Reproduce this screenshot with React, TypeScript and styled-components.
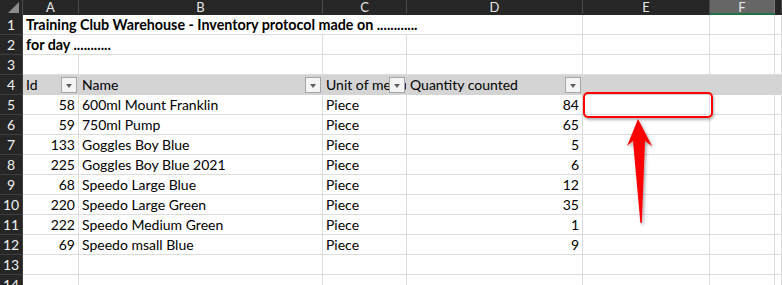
import React from 'react';
import styled, { createGlobalStyle } from 'styled-components';

const GlobalStyle = createGlobalStyle`
  html, body {
    margin: 0;
    padding: 0;
    background: #fff;
    overflow: hidden;
  }
  body {
    font-family: Lato, 'Liberation Sans', sans-serif;
    color: #000;
  }
`;

const Page = styled.div`
  position: relative;
  width: 782px;
  height: 285px;
  overflow: hidden;
`;

const Sheet = styled.div`
  display: grid;
  grid-template-columns: 23px 56px 244px 84px 176px 127px 65px 1fr;
  grid-template-rows: 15px;
  grid-auto-rows: 20px;
`;

const Corner = styled.div`
  position: relative;
  background: #262626;
  border-right: 1px solid #4a4a4a;
  box-sizing: border-box;

  &::after {
    content: '';
    position: absolute;
    right: 3px;
    bottom: 2px;
    border-style: solid;
    border-width: 0 0 11px 11px;
    border-color: transparent transparent #8c8c8c transparent;
  }
`;

const ColHead = styled.div<{ $active?: boolean }>`
  display: flex;
  align-items: center;
  justify-content: center;
  box-sizing: border-box;
  background: ${(p) => (p.$active ? '#666666' : '#262626')};
  border-right: 1px solid ${(p) => (p.$active ? '#7a7a7a' : '#4a4a4a')};
  border-bottom: 2px solid ${(p) => (p.$active ? '#217346' : '#262626')};
  color: #e6e6e6;
  font-size: 13px;
  line-height: 1;
  padding-top: 1px;
`;

const RowHead = styled.div`
  display: flex;
  align-items: center;
  justify-content: center;
  box-sizing: border-box;
  background: #262626;
  border-bottom: 1px solid #3d3d3d;
  border-right: 1px solid #3d3d3d;
  color: #f2f2f2;
  font-size: 14px;
`;

const Cell = styled.div<{
  $right?: boolean;
  $bold?: boolean;
  $band?: boolean;
  $filter?: boolean;
  $span?: number;
}>`
  position: relative;
  display: flex;
  align-items: flex-end;
  justify-content: ${(p) => (p.$right ? 'flex-end' : 'flex-start')};
  box-sizing: border-box;
  padding: 0 ${(p) => (p.$filter ? '18px' : '3px')} 2px 3px;
  grid-column: ${(p) => (p.$span ? `span ${p.$span}` : 'auto')};
  background: ${(p) => (p.$band ? '#d4d4d4' : '#fff')};
  border-right: 1px solid ${(p) => (p.$band ? '#d4d4d4' : '#dcdcdc')};
  border-bottom: 1px solid ${(p) => (p.$band ? '#d4d4d4' : '#dcdcdc')};
  font-size: ${(p) => (p.$bold ? '14.3px' : '14px')};
  font-weight: ${(p) => (p.$bold ? 700 : 400)};
  white-space: nowrap;
  overflow: hidden;
  line-height: 1;
`;

const FilterButton = styled.span`
  position: absolute;
  right: 1px;
  top: 2px;
  width: 16px;
  height: 16px;
  box-sizing: border-box;
  background: #f4f4f4;
  border: 1px solid #a6a6a6;

  &::after {
    content: '';
    position: absolute;
    left: 4px;
    top: 6px;
    border-style: solid;
    border-width: 4px 3.5px 0 3.5px;
    border-color: #5f5f5f transparent transparent transparent;
  }
`;

const Highlight = styled.div`
  position: absolute;
  left: 583px;
  top: 92px;
  width: 130px;
  height: 26px;
  box-sizing: border-box;
  border: 2px solid #ff0000;
  border-radius: 5px;
  box-shadow: 1px 2px 3px rgba(0, 0, 0, 0.3);
`;

const Arrow = styled.svg`
  position: absolute;
  left: 0;
  top: 0;
  width: 782px;
  height: 285px;
  pointer-events: none;
  overflow: visible;
`;

const columns = ['A', 'B', 'C', 'D', 'E', 'F', 'G'];

const items = [
  { id: 58, name: '600ml Mount Franklin', unit: 'Piece', qty: 84 },
  { id: 59, name: '750ml Pump', unit: 'Piece', qty: 65 },
  { id: 133, name: 'Goggles Boy Blue', unit: 'Piece', qty: 5 },
  { id: 225, name: 'Goggles Boy Blue 2021', unit: 'Piece', qty: 6 },
  { id: 68, name: 'Speedo Large Blue', unit: 'Piece', qty: 12 },
  { id: 220, name: 'Speedo Large Green', unit: 'Piece', qty: 35 },
  { id: 222, name: 'Speedo Medium Green', unit: 'Piece', qty: 1 },
  { id: 69, name: 'Speedo msall Blue', unit: 'Piece', qty: 9 },
];

const headers = ['Id', 'Name', 'Unit of measure', 'Quantity counted'];

const Blank = ({ n }: { n: number }) => (
  <>
    {Array.from({ length: n }).map((_, i) => (
      <Cell key={i} />
    ))}
  </>
);

export default function App() {
  return (
    <Page>
      <GlobalStyle />
      <Sheet>
        <Corner />
        {columns.map((c) => (
          <ColHead key={c} $active={c === 'F'}>
            {c === 'G' ? '' : c}
          </ColHead>
        ))}

        <RowHead>1</RowHead>
        <Cell $bold $span={4}>
          Training Club Warehouse - Inventory protocol made on ............
        </Cell>
        <Blank n={3} />

        <RowHead>2</RowHead>
        <Cell $bold $span={2}>
          for day ...........
        </Cell>
        <Blank n={5} />

        <RowHead>3</RowHead>
        <Blank n={7} />

        <RowHead>4</RowHead>
        {headers.map((h) => (
          <Cell key={h} $band $filter>
            {h}
            <FilterButton />
          </Cell>
        ))}
        <Cell $band />
        <Cell $band />
        <Cell $band />

        {items.map((it, i) => (
          <React.Fragment key={it.id}>
            <RowHead>{i + 5}</RowHead>
            <Cell $right>{it.id}</Cell>
            <Cell>{it.name}</Cell>
            <Cell>{it.unit}</Cell>
            <Cell $right>{it.qty}</Cell>
            <Blank n={3} />
          </React.Fragment>
        ))}

        <RowHead>13</RowHead>
        <Blank n={7} />
        <RowHead>14</RowHead>
        <Blank n={7} />
      </Sheet>

      <Highlight />
      <Arrow viewBox="0 0 782 285">
        <defs>
          <filter id="arrowShadow" x="-50%" y="-20%" width="200%" height="140%">
            <feDropShadow dx="1.5" dy="2" stdDeviation="1.5" floodColor="#000" floodOpacity="0.35" />
          </filter>
        </defs>
        <path
          d="M638 119 L652 146 L645 141 L641.8 223 L640.4 223 L633 141 L627 146 Z"
          fill="#ff0000"
          filter="url(#arrowShadow)"
        />
      </Arrow>
    </Page>
  );
}
